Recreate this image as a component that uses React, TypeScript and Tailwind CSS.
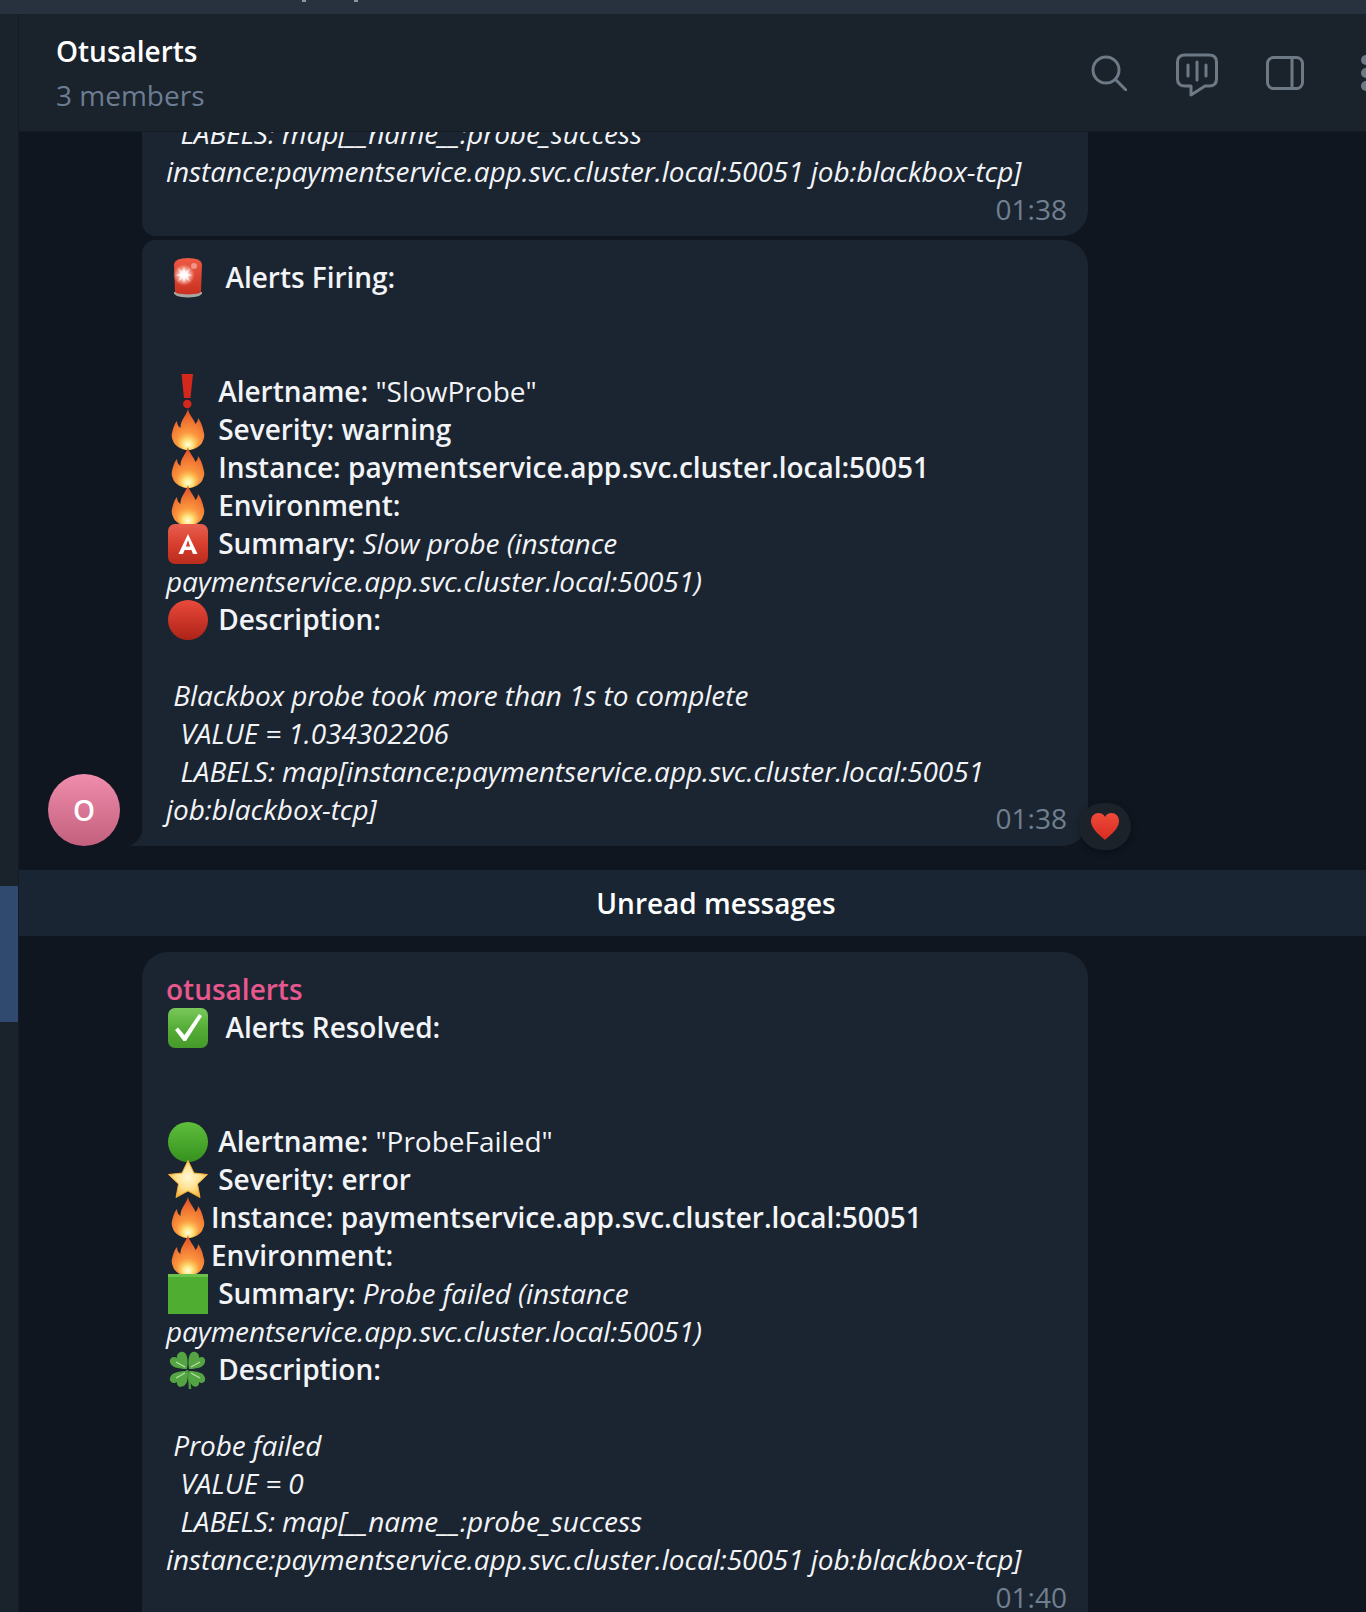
import type { ReactNode } from "react";

const openSans = "font-['Open_Sans',sans-serif]";

function Emoji({ children }: { children: ReactNode }) {
  return (
    <span className="inline-flex h-[38px] w-[45px] items-center justify-start pt-[2px] pl-[2px] align-top">
      <svg viewBox="0 0 40 40" className="h-10 w-10 shrink-0 overflow-visible">
        {children}
      </svg>
    </span>
  );
}

const Siren = () => (
  <Emoji>
    <defs>
      <linearGradient id="sirenDome" x1="0" y1="0" x2="0" y2="1">
        <stop offset="0" stopColor="#ee5a45" />
        <stop offset="1" stopColor="#c9301f" />
      </linearGradient>
      <radialGradient id="sirenGlow" cx="0.5" cy="0.5" r="0.5">
        <stop offset="0" stopColor="#ffffff" />
        <stop offset="0.35" stopColor="#ffe6e0" />
        <stop offset="1" stopColor="#ffb4a6" stopOpacity="0" />
      </radialGradient>
    </defs>
    <path d="M6 34 Q5 39 20 39.5 Q35 39 34 34 Z" fill="#a8a6a2" />
    <path d="M7 33 Q6 36 20 36.5 Q34 36 33 33 L34 6 Q33 0 20 0 Q7 0 6 6 Z" fill="url(#sirenDome)" />
    <circle cx="16" cy="17" r="11" fill="url(#sirenGlow)" />
    <path d="M16 8 L17.2 14.5 L22.5 10 L19 15.8 L25 17 L19 18.2 L22.5 24 L17.2 19.5 L16 26 L14.8 19.5 L9.5 24 L13 18.2 L7 17 L13 15.8 L9.5 10 L14.8 14.5 Z" fill="#fff" opacity="0.7" />
    <circle cx="26" cy="8" r="3" fill="#f4a79b" opacity="0.8" />
  </Emoji>
);

const Bang = () => (
  <Emoji>
    <path d="M13.5 2 H25 L22.5 26 H16 Z" fill="#d5281d" />
    <circle cx="19.3" cy="32" r="4.2" fill="#d5281d" />
  </Emoji>
);

const Fire = ({ id }: { id: string }) => (
  <Emoji>
    <defs>
      <radialGradient id={id} cx="0.5" cy="0.95" r="1">
        <stop offset="0" stopColor="#fdb84a" />
        <stop offset="0.45" stopColor="#f98f3c" />
        <stop offset="1" stopColor="#df4420" />
      </radialGradient>
      <radialGradient id={`${id}Glow`} cx="0.5" cy="0.75" r="0.6">
        <stop offset="0" stopColor="#fffde0" />
        <stop offset="0.35" stopColor="#ffe680" />
        <stop offset="1" stopColor="#fdb84a" stopOpacity="0" />
      </radialGradient>
    </defs>
    <path
      d="M20 -1 C21 5 26 9 27.5 14 C29 12 30 11 30 8 C34 13 35 19 36 23 C37 28 35 30 34 33 C31 37 26 40 20 40 C14 40 9 37 6 33 C5 30 3 28 4 23 C5 19 6 14 9 11 C9 15 11 17 12.5 18 C12 11 18 6 20 -1 Z"
      fill={`url(#${id})`}
    />
    <ellipse cx="20" cy="29" rx="11" ry="11" fill={`url(#${id}Glow)`} />
  </Emoji>
);

const ButtonA = () => (
  <Emoji>
    <defs>
      <linearGradient id="buttonA" x1="0" y1="0" x2="0" y2="1">
        <stop offset="0" stopColor="#e8604f" />
        <stop offset="0.5" stopColor="#d83e2d" />
        <stop offset="1" stopColor="#b92c1e" />
      </linearGradient>
    </defs>
    <rect x="0" y="0" width="40" height="40" rx="7" fill="url(#buttonA)" />
    <path d="M20 10 L29.5 30 H25 L23.4 26 H16.6 L15 30 H10.5 Z M20 16 L17.9 22.6 H22.1 Z" fill="#fff" fillRule="evenodd" />
  </Emoji>
);

const RedCircle = () => (
  <Emoji>
    <defs>
      <linearGradient id="redCircle" x1="0" y1="0" x2="0" y2="1">
        <stop offset="0" stopColor="#e94a3c" />
        <stop offset="1" stopColor="#ad2216" />
      </linearGradient>
    </defs>
    <circle cx="20" cy="20" r="20" fill="url(#redCircle)" />
  </Emoji>
);

const CheckBox = () => (
  <Emoji>
    <defs>
      <linearGradient id="checkBox" x1="0" y1="0" x2="0" y2="1">
        <stop offset="0" stopColor="#79c85a" />
        <stop offset="0.5" stopColor="#55ae37" />
        <stop offset="1" stopColor="#45992a" />
      </linearGradient>
    </defs>
    <rect x="0" y="0" width="40" height="40" rx="7" fill="url(#checkBox)" />
    <path d="M7 22 L10 19.5 L16.5 27 L31 6 L34 8 L18 33 H15.5 Z" fill="#fff" />
  </Emoji>
);

const GreenCircle = () => (
  <Emoji>
    <defs>
      <linearGradient id="greenCircle" x1="0" y1="0" x2="0" y2="1">
        <stop offset="0" stopColor="#5fbe3c" />
        <stop offset="1" stopColor="#35921f" />
      </linearGradient>
    </defs>
    <circle cx="20" cy="20" r="20" fill="url(#greenCircle)" />
  </Emoji>
);

const Star = () => (
  <Emoji>
    <defs>
      <radialGradient id="starFill" cx="0.5" cy="0.45" r="0.6">
        <stop offset="0" stopColor="#fff8d6" />
        <stop offset="0.55" stopColor="#fde08a" />
        <stop offset="1" stopColor="#f3ac38" />
      </radialGradient>
    </defs>
    <path
      d="M20 0.5 L26 13 L39.5 14.5 L29.5 24 L32 37.5 L20 31 L8 37.5 L10.5 24 L0.5 14.5 L14 13 Z"
      fill="url(#starFill)"
      stroke="#f2ae35"
      strokeWidth="1"
      strokeLinejoin="round"
    />
  </Emoji>
);

const GreenSquare = () => (
  <Emoji>
    <rect x="0" y="0" width="40" height="40" fill="#4fae32" />
    <rect x="0" y="0" width="40" height="3" fill="#6cc04e" />
  </Emoji>
);

const Clover = () => (
  <Emoji>
    <path d="M19 20 Q22 30 22 39" stroke="#4b9a3c" strokeWidth="2.5" fill="none" />
    <g fill="#54a443">
      <path d="M19 19 C10 19 3 17 2 12 C1 7 7 6 9 8 C8 3 14 0 17 3 C20 6 20 13 19 19 Z" />
      <path d="M21 19 C30 19 36 17 37 12 C38 7 33 6 31 8 C32 3 26 0 23 3 C20 6 20 13 21 19 Z" />
      <path d="M19 21 C10 21 3 23 2 28 C1 33 7 34 9 32 C8 37 14 38 17 35 C20 32 20 27 19 21 Z" />
      <path d="M21 21 C30 21 36 23 37 28 C38 33 33 34 31 32 C32 37 26 38 24 35 C21 32 20 27 21 21 Z" />
    </g>
    <g stroke="#b4e2a0" strokeWidth="1.4" fill="none">
      <path d="M17 17 L8 12" />
      <path d="M23 17 L32 12" />
      <path d="M17 23 L8 28" />
      <path d="M23 23 L32 28" />
    </g>
  </Emoji>
);

function Line({ children }: { children?: ReactNode }) {
  return <div className="h-[38px] whitespace-pre leading-[38px]">{children}</div>;
}

function B({ children }: { children: ReactNode }) {
  return <span className="font-semibold tracking-[-0.03px]">{children}</span>;
}

function I({ children }: { children: ReactNode }) {
  return <span className="italic tracking-[-0.07px]">{children}</span>;
}

function Time({ value }: { value: string }) {
  return <div className="mr-[-3px] text-[28px] leading-[38px] text-[#708090]">{value}</div>;
}

function BubbleTail() {
  return (
    <svg viewBox="0 0 16 26" className="absolute bottom-0 left-[-14px] h-[26px] w-4">
      <path d="M16 0 C16 14 10 24 0 26 H16 Z" fill="#1b2531" />
    </svg>
  );
}

export default function App() {
  return (
    <div className={`flex h-[1612px] w-[1366px] flex-col overflow-hidden bg-[#0f1620] text-[28px] text-[#f2f4f7] ${openSans}`}>
      <div className="flex h-3.5 shrink-0 items-start bg-[#28323f] pl-[302px]">
        <span className="h-[1.5px] w-1 bg-[#8a95a3]" />
        <span className="ml-12 h-[1.5px] w-1 bg-[#8a95a3]" />
      </div>
      <div className="flex min-h-0 flex-1">
        {/* left rail */}
        <div className="w-[19px] shrink-0 border-r border-[#141b24] bg-[#1a222b] pt-[872px]">
          <div className="h-[136px] bg-[#2f4a6e]" />
        </div>

        <div className="flex min-w-0 flex-1 flex-col">
          {/* header */}
          <div className="relative z-10 flex h-[118px] shrink-0 items-center justify-between border-b border-[#141b24] bg-[#1a222c] pl-[37px]">
            <div>
              <div className="font-semibold leading-[44px] text-white">Otusalerts</div>
              <div className="leading-[44px] text-[#6c7d92]">3 members</div>
            </div>
            <div className="mr-[-3px] flex items-center">
              <svg viewBox="0 0 36 36" className="mr-[49px] h-9 w-9 fill-none stroke-[#6d7a86]" strokeWidth="3">
                <circle cx="15" cy="15" r="13" />
                <path d="M24.5 24.5 L35 35" strokeLinecap="round" />
              </svg>
              <svg viewBox="0 0 42 44" className="mt-[4px] mr-[48px] h-11 w-[42px] fill-none stroke-[#6d7a86]" strokeWidth="3" strokeLinecap="round" strokeLinejoin="round">
                <path d="M9 2 H33 Q40.5 2 40.5 9 V26 Q40.5 33 33 33 H29 L15 42 V33 H9 Q1.5 33 1.5 26 V9 Q1.5 2 9 2 Z" />
                <path d="M12 12 V23 M21 9 V27 M30 12 V23" />
              </svg>
              <svg viewBox="0 0 38 34" className="mr-[57px] h-[34px] w-[38px] fill-none stroke-[#6d7a86]" strokeWidth="3">
                <rect x="1.5" y="1.5" width="35" height="31" rx="6" />
                <path d="M26 1.5 V32.5" />
              </svg>
              <div className="flex w-2 flex-col gap-[3px] overflow-hidden">
                <span className="h-[10px] w-[10px] shrink-0 rounded-full bg-[#6d7a86]" />
                <span className="h-[10px] w-[10px] shrink-0 rounded-full bg-[#6d7a86]" />
                <span className="h-[10px] w-[10px] shrink-0 rounded-full bg-[#6d7a86]" />
              </div>
            </div>
          </div>

          {/* messages */}
          <div className="min-h-0 flex-1 overflow-hidden">
            <div className="mt-[-18px] ml-[123px] h-[122px] w-[946px] rounded-b-[26px] rounded-bl-[14px] bg-[#1b2531] px-6">
              <Line>
                <I>{"  LABELS: map[__name__:probe_success"}</I>
              </Line>
              <Line>
                <I>instance:paymentservice.app.svc.cluster.local:50051 job:blackbox-tcp]</I>
              </Line>
              <div className="flex justify-end">
                <Time value="01:38" />
              </div>
            </div>

            <div className="mt-1 flex items-end">
              <div className="mr-[22px] ml-[29px] flex h-[72px] w-[72px] shrink-0 items-center justify-center rounded-full bg-gradient-to-b from-[#f08dac] to-[#c2607e] font-semibold text-white">
                O
              </div>
              <div className="relative w-[946px] rounded-t-[26px] rounded-tl-[14px] rounded-br-[26px] bg-[#1b2531] px-6 pt-[18px] pb-[9px]">
                <BubbleTail />
                <Line>
                  <Siren />
                  <B>{"  Alerts Firing:"}</B>
                </Line>
                <Line />
                <Line />
                <Line>
                  <Bang />
                  <B>{" Alertname:"}</B>
                  {' "SlowProbe"'}
                </Line>
                <Line>
                  <Fire id="fire1" />
                  <B>{" Severity: warning"}</B>
                </Line>
                <Line>
                  <Fire id="fire2" />
                  <B>{" Instance: paymentservice.app.svc.cluster.local:50051"}</B>
                </Line>
                <Line>
                  <Fire id="fire3" />
                  <B>{" Environment:"}</B>
                </Line>
                <Line>
                  <ButtonA />
                  <B>{" Summary:"}</B>
                  <I>{" Slow probe (instance"}</I>
                </Line>
                <Line>
                  <I>paymentservice.app.svc.cluster.local:50051)</I>
                </Line>
                <Line>
                  <RedCircle />
                  <B>{" Description:"}</B>
                </Line>
                <Line />
                <Line>
                  <I>{" Blackbox probe took more than 1s to complete"}</I>
                </Line>
                <Line>
                  <I>{"  VALUE = 1.034302206"}</I>
                </Line>
                <Line>
                  <I>{"  LABELS: map[instance:paymentservice.app.svc.cluster.local:50051"}</I>
                </Line>
                <div className="flex items-start justify-between">
                  <Line>
                    <I>job:blackbox-tcp]</I>
                  </Line>
                  <div className="pt-[9px]">
                    <Time value="01:38" />
                  </div>
                </div>
                {/* reaction */}
                <div className="absolute right-[-43px] bottom-[-4px] flex h-[47px] w-[52px] items-center justify-center rounded-full bg-[#1b2229] shadow-[0_2px_6px_rgba(0,0,0,0.35)]">
                  <svg viewBox="0 0 28 27" className="h-[27px] w-7">
                    <defs>
                      <linearGradient id="heartFill" x1="0" y1="0" x2="0" y2="1">
                        <stop offset="0" stopColor="#f04a3a" />
                        <stop offset="1" stopColor="#d42c20" />
                      </linearGradient>
                    </defs>
                    <path
                      d="M14 27 C12.5 25 0 17 0 8 C0 3 3.5 0 7.5 0 C10.5 0 12.8 1.6 14 4 C15.2 1.6 17.5 0 20.5 0 C24.5 0 28 3 28 8 C28 17 15.5 25 14 27 Z"
                      fill="url(#heartFill)"
                    />
                  </svg>
                </div>
              </div>
            </div>

            <div className="mt-6 flex h-[66px] items-center justify-center bg-[#1a2533] pl-[47px] font-semibold text-white">
              Unread messages
            </div>

            <div className="mt-4 ml-[123px] w-[946px] rounded-t-[26px] bg-[#1b2531] px-6 pt-[18px]">
              <div className="h-[38px] font-semibold leading-[38px] text-[#e8588f]">otusalerts</div>
              <Line>
                <CheckBox />
                <B>{"  Alerts Resolved:"}</B>
              </Line>
              <Line />
              <Line />
              <Line>
                <GreenCircle />
                <B>{" Alertname:"}</B>
                {' "ProbeFailed"'}
              </Line>
              <Line>
                <Star />
                <B>{" Severity: error"}</B>
              </Line>
              <Line>
                <Fire id="fire4" />
                <B>Instance: paymentservice.app.svc.cluster.local:50051</B>
              </Line>
              <Line>
                <Fire id="fire5" />
                <B>Environment:</B>
              </Line>
              <Line>
                <GreenSquare />
                <B>{" Summary:"}</B>
                <I>{" Probe failed (instance"}</I>
              </Line>
              <Line>
                <I>paymentservice.app.svc.cluster.local:50051)</I>
              </Line>
              <Line>
                <Clover />
                <B>{" Description:"}</B>
              </Line>
              <Line />
              <Line>
                <I>{" Probe failed"}</I>
              </Line>
              <Line>
                <I>{"  VALUE = 0"}</I>
              </Line>
              <Line>
                <I>{"  LABELS: map[__name__:probe_success"}</I>
              </Line>
              <Line>
                <I>instance:paymentservice.app.svc.cluster.local:50051 job:blackbox-tcp]</I>
              </Line>
              <div className="flex justify-end">
                <Time value="01:40" />
              </div>
            </div>
          </div>
        </div>
      </div>
    </div>
  );
}
